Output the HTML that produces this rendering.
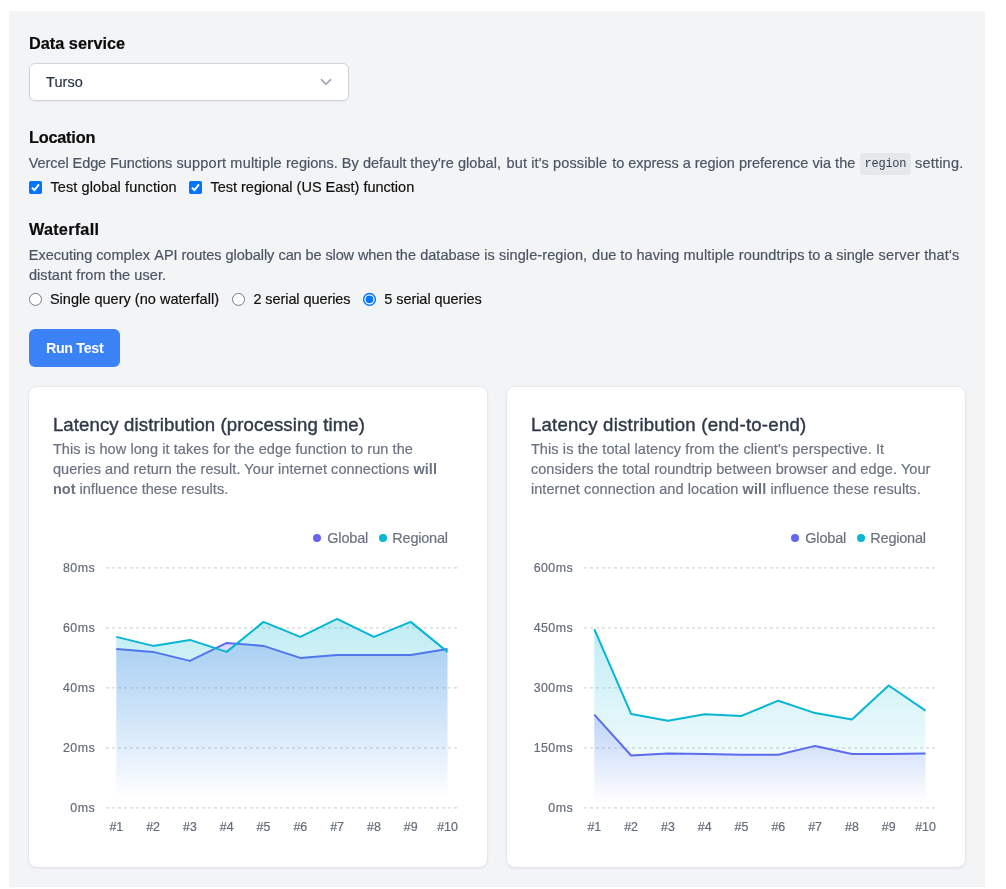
<!DOCTYPE html>
<html lang="en"><head><meta charset="utf-8"><title>Edge latency test</title>
<style>
html,body{margin:0;padding:0;background:#fff;}
body{width:1006px;height:889px;position:relative;overflow:hidden;font-family:"Liberation Sans",sans-serif;}
.panel{position:absolute;left:9px;top:11px;width:976px;height:876px;background:#f3f4f6;}
.tx{position:absolute;white-space:nowrap;line-height:1;margin:0;padding:0;-webkit-text-stroke:0.2px currentColor;}
.tx b{font-weight:700;-webkit-text-stroke:0;}
.select{position:absolute;left:29px;top:63px;width:318px;height:36px;border:1px solid #d1d5db;border-radius:6px;background:#fff;box-shadow:0 1px 2px rgba(0,0,0,0.05);}
.codebox{position:absolute;left:860px;top:153px;width:51px;height:22px;background:#e5e7eb;border-radius:4px;}
.cb{position:absolute;width:13px;height:13px;border-radius:1.8px;background:#0075ff;}
.rd{position:absolute;width:11.5px;height:11.5px;border-radius:50%;border:1px solid #767676;background:#fff;}
.rd.on{border:1.5px solid #0b73f3;width:10.5px;height:10.5px;}
.rd.on i{position:absolute;left:2px;top:2px;width:6.5px;height:6.5px;border-radius:50%;background:#0b73f3;}
.btn{position:absolute;left:29px;top:329px;width:91px;height:38px;border-radius:6px;background:#3b82f6;}
.card{position:absolute;top:387px;width:458px;height:480px;border-radius:8px;background:#fff;box-shadow:0 0 0 1px #e5e7eb,0 1px 3px rgba(0,0,0,0.1),0 1px 2px -1px rgba(0,0,0,0.1);}
.dot{position:absolute;width:8.4px;height:8.4px;border-radius:50%;top:533.6px;}
svg.ch{position:absolute;left:0;top:0;}
.cb svg{display:block;}
.gs{position:absolute;left:0;top:0;width:1006px;height:889px;will-change:transform;}
</style></head><body>
<div class="panel"></div>
<div class="select"></div>
<svg class="ch" width="1006" height="889" viewBox="0 0 1006 889" style="z-index:1;pointer-events:none"><path d="M321.4 79.6 L326 84.2 L330.6 79.6" fill="none" stroke="#9aa1ad" stroke-width="1.5" stroke-linecap="round" stroke-linejoin="round"/></svg>
<div class="codebox"></div>
<div class="cb" style="left:29px;top:181px"><svg width="13" height="13" viewBox="0 0 13 13"><path d="M2.9 6.8 L5.5 9.1 L9.9 3.4" fill="none" stroke="#fff" stroke-width="2" stroke-linecap="butt" stroke-linejoin="miter"/></svg></div>
<div class="cb" style="left:189px;top:181px"><svg width="13" height="13" viewBox="0 0 13 13"><path d="M2.9 6.8 L5.5 9.1 L9.9 3.4" fill="none" stroke="#fff" stroke-width="2" stroke-linecap="butt" stroke-linejoin="miter"/></svg></div>
<svg class="ch" width="1006" height="889" viewBox="0 0 1006 889"><circle cx="35.5" cy="299.4" r="6" fill="#fff" stroke="#737b88" stroke-width="1"/><circle cx="238.5" cy="299.4" r="6" fill="#fff" stroke="#737b88" stroke-width="1"/><circle cx="369.5" cy="299.4" r="5.85" fill="#fff" stroke="#0075ff" stroke-width="1.4"/><circle cx="369.5" cy="299.4" r="3.8" fill="#0075ff"/></svg>
<div class="btn"></div>
<div class="card" style="left:29px"></div>
<div class="card" style="left:507px"></div>
<div class="dot" style="left:312.9px;background:#6366f1"></div>
<div class="dot" style="left:378.8px;background:#06b6d4"></div>
<div class="dot" style="left:790.9px;background:#6366f1"></div>
<div class="dot" style="left:856.8px;background:#06b6d4"></div>

<svg class="ch" width="1006" height="889" viewBox="0 0 1006 889"><defs><linearGradient id="gia" x1="0" y1="0" x2="0" y2="1"><stop offset="5%" stop-color="#6366f1" stop-opacity="0.4"/><stop offset="95%" stop-color="#6366f1" stop-opacity="0"/></linearGradient><linearGradient id="gca" x1="0" y1="0" x2="0" y2="1"><stop offset="5%" stop-color="#06b6d4" stop-opacity="0.4"/><stop offset="95%" stop-color="#06b6d4" stop-opacity="0"/></linearGradient></defs>
<line x1="106" x2="458" y1="567.9" y2="567.9" stroke="#ccc" stroke-width="1" stroke-dasharray="3 3"/>
<line x1="106" x2="458" y1="627.9" y2="627.9" stroke="#ccc" stroke-width="1" stroke-dasharray="3 3"/>
<line x1="106" x2="458" y1="687.9" y2="687.9" stroke="#ccc" stroke-width="1" stroke-dasharray="3 3"/>
<line x1="106" x2="458" y1="747.9" y2="747.9" stroke="#ccc" stroke-width="1" stroke-dasharray="3 3"/>
<line x1="106" x2="458" y1="807.9" y2="807.9" stroke="#ccc" stroke-width="1" stroke-dasharray="3 3"/>
<path d="M116.30,648.90 L153.10,651.90 L189.90,660.90 L226.70,642.90 L263.50,645.90 L300.30,657.90 L337.10,654.90 L373.90,654.90 L410.70,654.90 L447.50,648.90 L447.50,807.90 L116.30,807.90 Z" fill="url(#gia)" fill-opacity="0.6" stroke="none"/>
<path d="M116.30,648.90 L153.10,651.90 L189.90,660.90 L226.70,642.90 L263.50,645.90 L300.30,657.90 L337.10,654.90 L373.90,654.90 L410.70,654.90 L447.50,648.90" fill="none" stroke="#6366f1" stroke-width="2" stroke-linejoin="round" stroke-linecap="butt"/>
<path d="M116.30,636.90 L153.10,645.90 L189.90,639.90 L226.70,651.90 L263.50,621.90 L300.30,636.90 L337.10,618.90 L373.90,636.90 L410.70,621.90 L447.50,651.90 L447.50,807.90 L116.30,807.90 Z" fill="url(#gca)" fill-opacity="0.6" stroke="none"/>
<path d="M116.30,636.90 L153.10,645.90 L189.90,639.90 L226.70,651.90 L263.50,621.90 L300.30,636.90 L337.10,618.90 L373.90,636.90 L410.70,621.90 L447.50,651.90" fill="none" stroke="#06b6d4" stroke-width="2" stroke-linejoin="round" stroke-linecap="butt"/><defs><linearGradient id="gib" x1="0" y1="0" x2="0" y2="1"><stop offset="5%" stop-color="#6366f1" stop-opacity="0.4"/><stop offset="95%" stop-color="#6366f1" stop-opacity="0"/></linearGradient><linearGradient id="gcb" x1="0" y1="0" x2="0" y2="1"><stop offset="5%" stop-color="#06b6d4" stop-opacity="0.4"/><stop offset="95%" stop-color="#06b6d4" stop-opacity="0"/></linearGradient></defs>
<line x1="584" x2="936" y1="567.9" y2="567.9" stroke="#ccc" stroke-width="1" stroke-dasharray="3 3"/>
<line x1="584" x2="936" y1="627.9" y2="627.9" stroke="#ccc" stroke-width="1" stroke-dasharray="3 3"/>
<line x1="584" x2="936" y1="687.9" y2="687.9" stroke="#ccc" stroke-width="1" stroke-dasharray="3 3"/>
<line x1="584" x2="936" y1="747.9" y2="747.9" stroke="#ccc" stroke-width="1" stroke-dasharray="3 3"/>
<line x1="584" x2="936" y1="807.9" y2="807.9" stroke="#ccc" stroke-width="1" stroke-dasharray="3 3"/>
<path d="M594.30,714.70 L631.10,755.50 L667.90,753.50 L704.70,754.10 L741.50,754.70 L778.30,754.70 L815.10,745.90 L851.90,753.90 L888.70,753.90 L925.50,753.50 L925.50,807.90 L594.30,807.90 Z" fill="url(#gib)" fill-opacity="0.6" stroke="none"/>
<path d="M594.30,714.70 L631.10,755.50 L667.90,753.50 L704.70,754.10 L741.50,754.70 L778.30,754.70 L815.10,745.90 L851.90,753.90 L888.70,753.90 L925.50,753.50" fill="none" stroke="#6366f1" stroke-width="2" stroke-linejoin="round" stroke-linecap="butt"/>
<path d="M594.30,629.10 L631.10,713.90 L667.90,720.70 L704.70,714.30 L741.50,715.90 L778.30,700.70 L815.10,713.10 L851.90,719.50 L888.70,685.50 L925.50,710.70 L925.50,807.90 L594.30,807.90 Z" fill="url(#gcb)" fill-opacity="0.6" stroke="none"/>
<path d="M594.30,629.10 L631.10,713.90 L667.90,720.70 L704.70,714.30 L741.50,715.90 L778.30,700.70 L815.10,713.10 L851.90,719.50 L888.70,685.50 L925.50,710.70" fill="none" stroke="#06b6d4" stroke-width="2" stroke-linejoin="round" stroke-linecap="butt"/></svg>
<div class="gs">
<div class="tx" id="h1" style="left:28.90px;top:35.20px;font-size:16.3px;color:#0b0b0c;font-weight:700;letter-spacing:0.029px;">Data service</div>
<div class="tx" id="h2" style="left:28.90px;top:129.20px;font-size:16.3px;color:#0b0b0c;font-weight:700;letter-spacing:-0.193px;">Location</div>
<div class="tx" id="h3" style="left:28.90px;top:221.20px;font-size:16.3px;color:#0b0b0c;font-weight:700;letter-spacing:0.238px;">Waterfall</div>
<div class="tx" id="sel" style="left:46.00px;top:74.73px;font-size:14.5px;color:#2b3544;letter-spacing:0.094px;">Turso</div>
<div class="tx" id="p1_0" style="left:28.80px;top:155.73px;font-size:14.5px;color:#4b5563;letter-spacing:-0.081px;">Vercel Edge Functions</div>
<div class="tx" id="p1_1" style="left:176.40px;top:155.73px;font-size:14.5px;color:#4b5563;letter-spacing:0.196px;">support multiple</div>
<div class="tx" id="p1_2" style="left:286.00px;top:155.73px;font-size:14.5px;color:#4b5563;letter-spacing:0.026px;">regions. By default</div>
<div class="tx" id="p1_3" style="left:410.30px;top:155.73px;font-size:14.5px;color:#4b5563;letter-spacing:0.065px;">they're global,</div>
<div class="tx" id="p1_4" style="left:506.60px;top:155.73px;font-size:14.5px;color:#4b5563;letter-spacing:0.113px;">but it's possible</div>
<div class="tx" id="p1_5" style="left:612.20px;top:155.73px;font-size:14.5px;color:#4b5563;letter-spacing:-0.038px;">to express a region</div>
<div class="tx" id="p1_6" style="left:739.00px;top:155.73px;font-size:14.5px;color:#4b5563;letter-spacing:0.012px;">preference via the</div>
<div class="tx" id="code" style="left:864.60px;top:157.84px;font-size:12px;color:#374151;font-family:'Liberation Mono', monospace;letter-spacing:-0.270px;-webkit-text-stroke:0;">region</div>
<div class="tx" id="p1b" style="left:915.00px;top:155.73px;font-size:14.5px;color:#4b5563;letter-spacing:0.206px;">setting.</div>
<div class="tx" id="w1_0" style="left:28.80px;top:247.73px;font-size:14.5px;color:#4b5563;letter-spacing:-0.035px;">Executing complex</div>
<div class="tx" id="w1_1" style="left:154.30px;top:247.73px;font-size:14.5px;color:#4b5563;letter-spacing:-0.048px;">API routes globally</div>
<div class="tx" id="w1_2" style="left:278.50px;top:247.73px;font-size:14.5px;color:#4b5563;letter-spacing:-0.098px;">can be slow when</div>
<div class="tx" id="w1_3" style="left:395.80px;top:247.73px;font-size:14.5px;color:#4b5563;letter-spacing:0.036px;">the database is</div>
<div class="tx" id="w1_4" style="left:498.90px;top:247.73px;font-size:14.5px;color:#4b5563;letter-spacing:0.088px;">single-region,</div>
<div class="tx" id="w1_5" style="left:592.10px;top:247.73px;font-size:14.5px;color:#4b5563;letter-spacing:0.009px;">due to having</div>
<div class="tx" id="w1_6" style="left:683.50px;top:247.73px;font-size:14.5px;color:#4b5563;letter-spacing:0.138px;">multiple roundtrips</div>
<div class="tx" id="w1_7" style="left:808.30px;top:247.73px;font-size:14.5px;color:#4b5563;letter-spacing:-0.037px;">to a single</div>
<div class="tx" id="w1_8" style="left:878.60px;top:247.73px;font-size:14.5px;color:#4b5563;letter-spacing:0.175px;">server that's</div>
<div class="tx" id="w2" style="left:28.90px;top:267.73px;font-size:14.5px;color:#4b5563;letter-spacing:0.086px;">distant from the user.</div>
<div class="tx" id="c1" style="left:50.40px;top:179.73px;font-size:14.5px;color:#111111;letter-spacing:0.113px;">Test global function</div>
<div class="tx" id="c2" style="left:210.40px;top:179.73px;font-size:14.5px;color:#111111;letter-spacing:-0.003px;">Test regional (US East) function</div>
<div class="tx" id="r1" style="left:49.90px;top:291.73px;font-size:14.5px;color:#111111;letter-spacing:0.024px;">Single query (no waterfall)</div>
<div class="tx" id="r2" style="left:253.40px;top:291.73px;font-size:14.5px;color:#111111;letter-spacing:-0.077px;">2 serial queries</div>
<div class="tx" id="r3" style="left:384.20px;top:291.73px;font-size:14.5px;color:#111111;letter-spacing:-0.046px;">5 serial queries</div>
<div class="tx" id="btn" style="left:45.90px;top:340.90px;font-size:14.3px;color:#fff;font-weight:700;letter-spacing:-0.326px;-webkit-text-stroke:0;">Run Test</div>
<div class="tx" id="t1" style="left:52.90px;top:416.46px;font-size:18.6px;color:#2f3947;letter-spacing:0.109px;-webkit-text-stroke:0.4px #2f3947;">Latency distribution (processing time)</div>
<div class="tx" id="t2" style="left:530.90px;top:416.46px;font-size:18.6px;color:#2f3947;letter-spacing:0.239px;-webkit-text-stroke:0.4px #2f3947;">Latency distribution (end-to-end)</div>
<div class="tx" id="a1" style="left:52.90px;top:441.73px;font-size:14.5px;color:#6b7280;letter-spacing:0.080px;">This is how long it takes for the edge function to run the</div>
<div class="tx" id="a2" style="left:52.90px;top:461.73px;font-size:14.5px;color:#6b7280;letter-spacing:0.074px;">queries and return the result. Your internet connections <b>will</b></div>
<div class="tx" id="a3" style="left:52.90px;top:481.73px;font-size:14.5px;color:#6b7280;letter-spacing:0.015px;"><b>not</b> influence these results.</div>
<div class="tx" id="b1" style="left:530.90px;top:441.73px;font-size:14.5px;color:#6b7280;letter-spacing:0.109px;">This is the total latency from the client's perspective. It</div>
<div class="tx" id="b2" style="left:530.90px;top:461.73px;font-size:14.5px;color:#6b7280;letter-spacing:0.077px;">considers the total roundtrip between browser and edge. Your</div>
<div class="tx" id="b3" style="left:530.90px;top:481.73px;font-size:14.5px;color:#6b7280;letter-spacing:0.087px;">internet connection and location <b>will</b> influence these results.</div>
<div class="tx" id="lg" style="left:327.20px;top:530.53px;font-size:14.5px;color:#6b7280;letter-spacing:-0.154px;">Global</div>
<div class="tx" id="lr" style="left:392.30px;top:530.53px;font-size:14.5px;color:#6b7280;letter-spacing:-0.219px;">Regional</div>
<div class="tx" id="mg" style="left:805.20px;top:530.53px;font-size:14.5px;color:#6b7280;letter-spacing:-0.154px;">Global</div>
<div class="tx" id="mr" style="left:870.30px;top:530.53px;font-size:14.5px;color:#6b7280;letter-spacing:-0.219px;">Regional</div>
<div class="tx" id="ya0" style="right:911.00px;top:561.60px;font-size:12.4px;color:#656c79;letter-spacing:0.42px;">80ms</div>
<div class="tx" id="ya1" style="right:911.00px;top:621.60px;font-size:12.4px;color:#656c79;letter-spacing:0.42px;">60ms</div>
<div class="tx" id="ya2" style="right:911.00px;top:681.60px;font-size:12.4px;color:#656c79;letter-spacing:0.42px;">40ms</div>
<div class="tx" id="ya3" style="right:911.00px;top:741.60px;font-size:12.4px;color:#656c79;letter-spacing:0.42px;">20ms</div>
<div class="tx" id="ya4" style="right:911.00px;top:801.60px;font-size:12.4px;color:#656c79;letter-spacing:0.42px;">0ms</div>
<div class="tx" id="xa0" style="left:116.30px;transform:translateX(-50%);top:821.30px;font-size:12.4px;color:#656c79;">#1</div>
<div class="tx" id="xa1" style="left:153.10px;transform:translateX(-50%);top:821.30px;font-size:12.4px;color:#656c79;">#2</div>
<div class="tx" id="xa2" style="left:189.90px;transform:translateX(-50%);top:821.30px;font-size:12.4px;color:#656c79;">#3</div>
<div class="tx" id="xa3" style="left:226.70px;transform:translateX(-50%);top:821.30px;font-size:12.4px;color:#656c79;">#4</div>
<div class="tx" id="xa4" style="left:263.50px;transform:translateX(-50%);top:821.30px;font-size:12.4px;color:#656c79;">#5</div>
<div class="tx" id="xa5" style="left:300.30px;transform:translateX(-50%);top:821.30px;font-size:12.4px;color:#656c79;">#6</div>
<div class="tx" id="xa6" style="left:337.10px;transform:translateX(-50%);top:821.30px;font-size:12.4px;color:#656c79;">#7</div>
<div class="tx" id="xa7" style="left:373.90px;transform:translateX(-50%);top:821.30px;font-size:12.4px;color:#656c79;">#8</div>
<div class="tx" id="xa8" style="left:410.70px;transform:translateX(-50%);top:821.30px;font-size:12.4px;color:#656c79;">#9</div>
<div class="tx" id="xa9" style="left:447.50px;transform:translateX(-50%);top:821.30px;font-size:12.4px;color:#656c79;">#10</div>
<div class="tx" id="yb0" style="right:433.00px;top:561.60px;font-size:12.4px;color:#656c79;letter-spacing:0.42px;">600ms</div>
<div class="tx" id="yb1" style="right:433.00px;top:621.60px;font-size:12.4px;color:#656c79;letter-spacing:0.42px;">450ms</div>
<div class="tx" id="yb2" style="right:433.00px;top:681.60px;font-size:12.4px;color:#656c79;letter-spacing:0.42px;">300ms</div>
<div class="tx" id="yb3" style="right:433.00px;top:741.60px;font-size:12.4px;color:#656c79;letter-spacing:0.42px;">150ms</div>
<div class="tx" id="yb4" style="right:433.00px;top:801.60px;font-size:12.4px;color:#656c79;letter-spacing:0.42px;">0ms</div>
<div class="tx" id="xb0" style="left:594.30px;transform:translateX(-50%);top:821.30px;font-size:12.4px;color:#656c79;">#1</div>
<div class="tx" id="xb1" style="left:631.10px;transform:translateX(-50%);top:821.30px;font-size:12.4px;color:#656c79;">#2</div>
<div class="tx" id="xb2" style="left:667.90px;transform:translateX(-50%);top:821.30px;font-size:12.4px;color:#656c79;">#3</div>
<div class="tx" id="xb3" style="left:704.70px;transform:translateX(-50%);top:821.30px;font-size:12.4px;color:#656c79;">#4</div>
<div class="tx" id="xb4" style="left:741.50px;transform:translateX(-50%);top:821.30px;font-size:12.4px;color:#656c79;">#5</div>
<div class="tx" id="xb5" style="left:778.30px;transform:translateX(-50%);top:821.30px;font-size:12.4px;color:#656c79;">#6</div>
<div class="tx" id="xb6" style="left:815.10px;transform:translateX(-50%);top:821.30px;font-size:12.4px;color:#656c79;">#7</div>
<div class="tx" id="xb7" style="left:851.90px;transform:translateX(-50%);top:821.30px;font-size:12.4px;color:#656c79;">#8</div>
<div class="tx" id="xb8" style="left:888.70px;transform:translateX(-50%);top:821.30px;font-size:12.4px;color:#656c79;">#9</div>
<div class="tx" id="xb9" style="left:925.50px;transform:translateX(-50%);top:821.30px;font-size:12.4px;color:#656c79;">#10</div>
</div>
</body></html>
